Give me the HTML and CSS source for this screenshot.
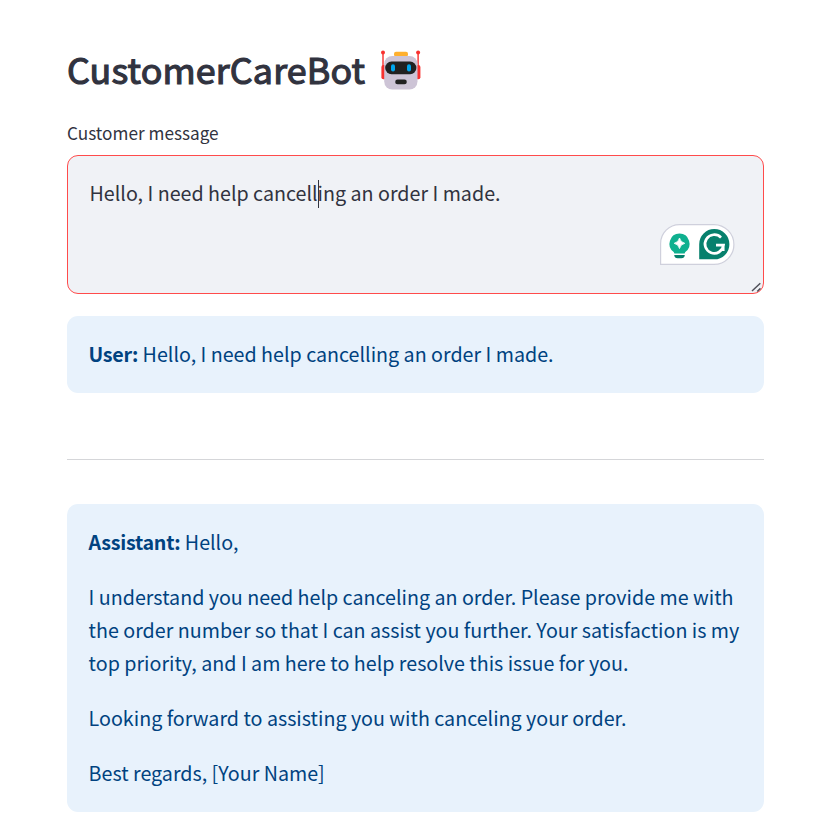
FILE: index.html
```html
<!DOCTYPE html>
<html lang="en">
<head>
<meta charset="utf-8">
<title>CustomerCareBot</title>
<link rel="stylesheet" href="styles.css">
</head>
<body>
<main class="app">
  <header class="heading">
    <h1 class="title">CustomerCareBot</h1>
    <svg class="robot" viewBox="0 0 42 40" aria-label="Robot">
      <rect x="14" y="1.8" width="14" height="5" rx="2" fill="#ffb02e"/>
      <rect x="2.3" y="2" width="1.4" height="16" fill="#f8312f"/>
      <rect x="37.4" y="2" width="1.4" height="16" fill="#f8312f"/>
      <circle cx="3" cy="2.6" r="2" fill="#f8312f"/>
      <circle cx="38.1" cy="2.6" r="2" fill="#f8312f"/>
      <rect x="1.4" y="15" width="5" height="14.3" rx="2" fill="#f8312f"/>
      <rect x="35.4" y="15" width="5" height="14.3" rx="2" fill="#f8312f"/>
      <rect x="4.2" y="6" width="33.3" height="33.5" rx="8" fill="#cdc4d6"/>
      <rect x="5.2" y="11.6" width="31.2" height="12.6" rx="6.3" fill="#212121"/>
      <rect x="11" y="14.3" width="4" height="7.3" rx="2" fill="#00a6ed"/>
      <rect x="27" y="14.3" width="4" height="7.3" rx="2" fill="#00a6ed"/>
      <rect x="15.2" y="29.6" width="11.6" height="4.6" rx="2.3" fill="#212121"/>
    </svg>
  </header>

  <div class="label">Customer message</div>
  <div class="textarea">
    <p class="typed">Hello, I need help cancell<span class="caret"></span>ing an order I made.</p>
    <svg class="assist" viewBox="0 0 75 41" aria-label="Writing assistant">
      <path d="M.6 40.4V19.6A19 19 0 0 1 19.6.6H54A19.9 19.9 0 0 1 54 40.4Z" fill="#fff" stroke="#cfd0dc" stroke-width="1.2"/>
      <path d="M19.5 9.6a10.1 10.1 0 0 1 5.8 18.3l-.7 1.6H14.4l-.7-1.6A10.1 10.1 0 0 1 19.5 9.6Z" fill="#0fb08f"/>
      <path d="M19.5 14Q20.5 18.3 24.8 19.3Q20.5 20.3 19.5 24.6Q18.5 20.3 14.2 19.3Q18.5 18.3 19.5 14Z" fill="#fff" stroke="#fff" stroke-width=".8"/>
      <path d="M14.2 31H24.8Q24.4 34.2 21.5 34.2H17.5Q14.6 34.2 14.2 31Z" fill="#05806c"/>
      <path d="M39.2 35.2V20.2A15.1 15.1 0 1 1 54.3 35.3Z" fill="#07806d"/>
      <path d="M61 13.6A9.3 9.3 0 1 0 63.5 21.2H56M63.2 19.9V27" fill="none" stroke="#fff" stroke-width="2.7"/>
    </svg>
    <svg class="grip" viewBox="0 0 12 12"><path d="M1 10L9.3 2.2M6.2 10.5L9.5 7.4" stroke="#50515a" stroke-width="1.5"/></svg>
  </div>

  <section class="alert"><p><strong>User:</strong> Hello, I need help cancelling an order I made.</p></section>
  <hr class="divider">
  <section class="alert">
    <p><strong>Assistant:</strong> Hello,</p>
    <p>I understand you need help canceling an order. Please provide me with the order number so that I can assist you further. Your satisfaction is my top priority, and I am here to help resolve this issue for you.</p>
    <p>Looking forward to assisting you with canceling your order.</p>
    <p>Best regards, [Your Name]</p>
  </section>
</main>
</body>
</html>
```
FILE: styles.css
```css
* { box-sizing: border-box; }
body {
  margin: 0;
  background: #fff;
  color: #31333f;
  font-family: "Noto Sans CJK SC", "Open Sans", sans-serif;
  font-size: 19.68px;
  line-height: 33px;
}
p { margin: 0; }
.app { width: 697px; margin-left: 67px; padding-top: 39px; }
.heading { display: flex; align-items: center; height: 58px; }
.title {
  width: 313px;
  margin: 0;
  font-size: 35.8px;
  line-height: 58px;
  font-weight: 400;
  letter-spacing: .15px;
  -webkit-text-stroke: 1.2px #31333f;
}
.robot { width: 42px; height: 40px; margin-top: 4px; }
.label { margin-top: 22px; height: 36px; line-height: 27px; font-size: 17.2px; }
.textarea {
  position: relative;
  height: 139px;
  padding: 20px 21.5px;
  border: 1px solid #ff4b4b;
  border-radius: 11px;
  background: #f0f2f6;
}
.caret { display: inline-block; width: 1px; height: 28px; margin-right: -1px; vertical-align: -7px; background: #31333f; }
.assist { position: absolute; left: 592px; top: 68px; width: 75px; height: 41px; }
.grip { position: absolute; right: 0; bottom: 0; width: 12px; height: 12px; }
.alert {
  margin-top: 22px;
  padding: 21px 21px 23px 21.6px;
  border-radius: 11px;
  background: #e8f2fc;
  color: #004280;
  display: flex;
  flex-direction: column;
  gap: 22px;
}
.alert strong { font-weight: 700; letter-spacing: -.28px; }
.divider { margin: 66px 0 44px; border: 0; height: 1px; background: #d5d6d9; }
.divider + .alert { margin-top: 0; }
```
